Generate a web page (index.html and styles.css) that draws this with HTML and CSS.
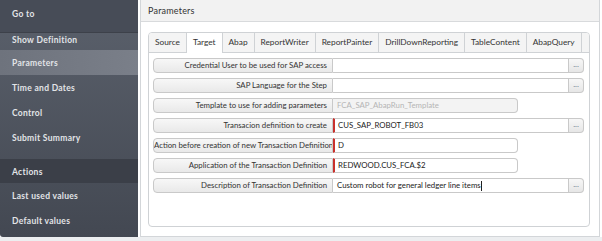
FILE: index.html
```html
<!DOCTYPE html>
<html lang="en">
<head>
    <meta charset="UTF-8">
    <title>Parameters</title>
    <link rel="stylesheet" href="styles.css">
</head>
<body>
    <div class="layout">
        <nav class="sidebar">
            <div class="nav-head">Go to</div>
            <div class="nav-item first">Show Definition</div>
            <div class="nav-item active">Parameters</div>
            <div class="nav-item">Time and Dates</div>
            <div class="nav-item">Control</div>
            <div class="nav-item">Submit Summary</div>
            <div class="nav-head actions">Actions</div>
            <div class="nav-item">Last used values</div>
            <div class="nav-item">Default values</div>
        </nav>

        <div class="main">
            <div class="main-header">Parameters</div>
            <div class="main-body">
                <div class="tab-panel">
                    <div class="tabs">
                        <div class="tab">Source</div>
                        <div class="tab active">Target</div>
                        <div class="tab">Abap</div>
                        <div class="tab">ReportWriter</div>
                        <div class="tab">ReportPainter</div>
                        <div class="tab">DrillDownReporting</div>
                        <div class="tab">TableContent</div>
                        <div class="tab">AbapQuery</div>
                    </div>

                    <div class="fields">
                        <div class="row">
                            <div class="label">Credential User to be used for SAP access</div>
                            <div class="value wide"></div>
                            <div class="more">...</div>
                        </div>
                        <div class="row">
                            <div class="label">SAP Language for the Step</div>
                            <div class="value wide"></div>
                            <div class="more">...</div>
                        </div>
                        <div class="row">
                            <div class="label">Template to use for adding parameters</div>
                            <div class="value short disabled">FCA_SAP_AbapRun_Template</div>
                        </div>
                        <div class="row">
                            <div class="label">Transacion definition to create</div>
                            <div class="value wide required">CUS_SAP_ROBOT_FB03</div>
                            <div class="more">...</div>
                        </div>
                        <div class="row">
                            <div class="label">Action before creation of new Transaction Definition</div>
                            <div class="value short required">D</div>
                        </div>
                        <div class="row">
                            <div class="label">Application of the Transaction Definition</div>
                            <div class="value short required">REDWOOD.CUS_FCA.$2</div>
                        </div>
                        <div class="row">
                            <div class="label">Description of Transaction Definition</div>
                            <div class="value wide">Custom robot for general ledger line items<span class="caret"></span></div>
                            <div class="more">...</div>
                        </div>
                    </div>
                </div>
            </div>
        </div>
    </div>
</body>
</html>
```

FILE: styles.css
```css
* {
    box-sizing: border-box;
    margin: 0;
    padding: 0;
}

body {
    font-family: 'Lato', 'Open Sans', sans-serif;
    background-color: #eceef0;
    width: 602px;
    height: 241px;
    overflow: hidden;
}

.layout {
    display: flex;
    height: 237px;
    background: #fff;
}

/* left navigation */
.sidebar {
    width: 138px;
    flex-shrink: 0;
    background: linear-gradient(to bottom, #5b616c, #434852);
    border-bottom-left-radius: 3px;
    color: #e2e4e7;
    font-size: 8.5px;
    font-weight: 700;
    letter-spacing: 0.3px;
}

.nav-head {
    height: 33px;
    padding: 9px 12px 0;
    background: #474c57;
    border-bottom: 1px solid #3d414a;
}

.nav-item {
    height: 25px;
    padding: 1px 12px 0;
    line-height: 25px;
}

.nav-item.first {
    height: 17px;
    line-height: 13px;
}

.nav-item.active {
    background: linear-gradient(to right, #6e737d, #7a7f89);
}

.nav-head.actions {
    height: 24px;
    margin-top: 9px;
    padding-top: 1px;
    line-height: 24px;
    background: #3b3f48;
    border-bottom: none;
}

/* main panel */
.main {
    flex: 1;
    margin-left: 2px;
    margin-right: 2px;
    border: 1px solid #d3d6d9;
    border-top: none;
    display: flex;
    flex-direction: column;
}

.main-header {
    height: 22px;
    line-height: 22px;
    padding-left: 7px;
    background: #f2f2f2;
    border-bottom: 1px solid #d8dadc;
    font-size: 9px;
    color: #333;
    letter-spacing: 0.2px;
}

.main-body {
    flex: 1;
    padding: 10px 9px 9px 7px;
}

.tab-panel {
    height: 100%;
    border: 1px solid #cfd2d5;
    border-radius: 4px;
    overflow: hidden;
}

.tabs {
    display: flex;
    height: 20px;
    background: #f4f4f4;
    border-bottom: 1px solid #cfd2d5;
}

.tab {
    padding: 0 6px;
    line-height: 19px;
    font-size: 8.3px;
    color: #333;
    border-right: 1px solid #cfd2d5;
    white-space: nowrap;
}

.tab.active {
    background: #fff;
    height: 20px;
}

.fields {
    display: flex;
    flex-direction: column;
    gap: 5px;
    padding: 5px 5px 0 4px;
}

.row {
    display: flex;
    height: 15px;
    font-size: 7.8px;
}

.label {
    width: 180px;
    flex-shrink: 0;
    padding-right: 5px;
    text-align: right;
    line-height: 13px;
    white-space: nowrap;
    overflow: hidden;
    color: #333;
    background: linear-gradient(to bottom, #f7f7f7, #e9e9e9);
    border: 1px solid #c9c9c9;
    border-radius: 4px 0 0 4px;
}

.value {
    padding-left: 4px;
    line-height: 13px;
    color: #222;
    background: #fff;
    border: 1px solid #c9c9c9;
    border-left: none;
    white-space: nowrap;
}

.value.wide {
    width: 236px;
}

.value.short {
    width: 185px;
    border-radius: 0 4px 4px 0;
}

.value.required {
    border-left: 2px solid #c9302c;
    padding-left: 3px;
}

.value.disabled {
    background: #f3f3f3;
    color: #b5b5b5;
}

.caret {
    display: inline-block;
    width: 1px;
    height: 10px;
    background: #222;
    vertical-align: middle;
}

.more {
    width: 15px;
    line-height: 11px;
    text-align: center;
    font-size: 8px;
    color: #6a7a90;
    background: linear-gradient(to bottom, #f7f7f7, #e6e6e6);
    border: 1px solid #c9c9c9;
    border-left: none;
    border-radius: 0 4px 4px 0;
}
```
